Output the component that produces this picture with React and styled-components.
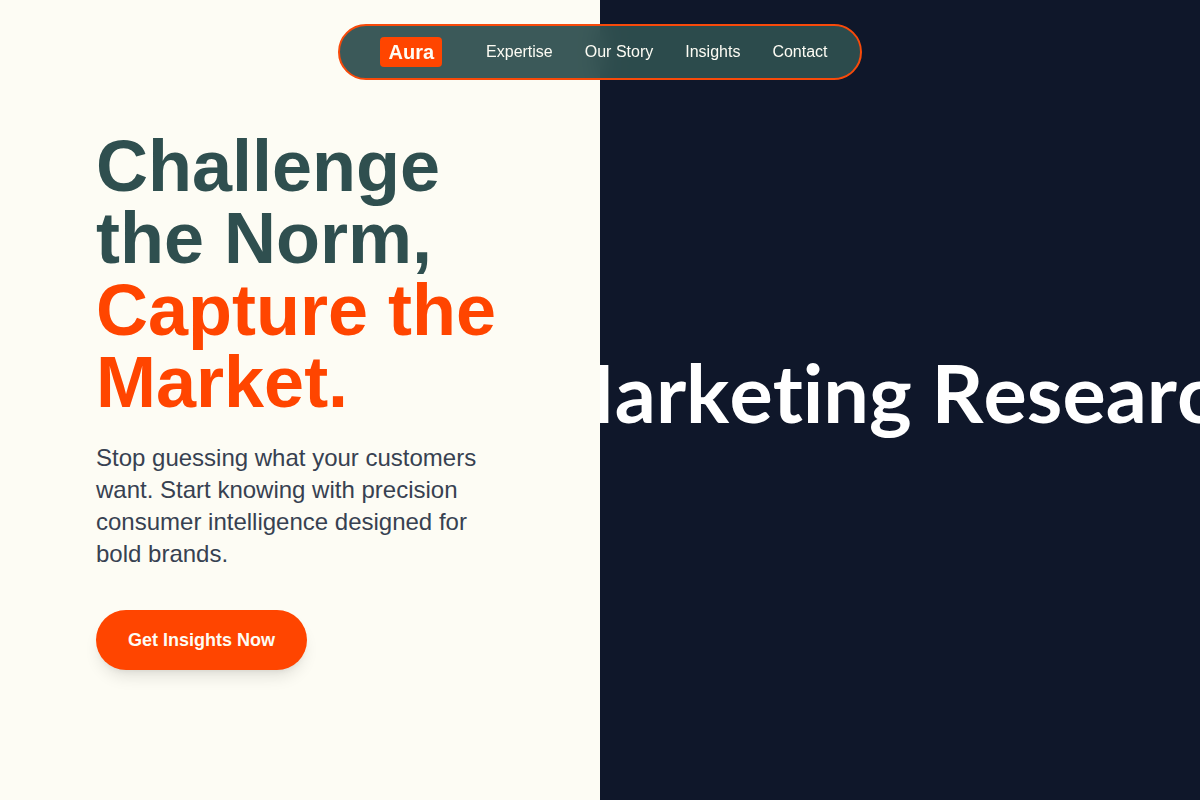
import React from 'react';
import styled, { createGlobalStyle } from 'styled-components';

const GlobalStyle = createGlobalStyle`
  * {
    box-sizing: border-box;
  }

  body {
    margin: 0;
    background-color: #fdfcf4;
    font-family: "Liberation Sans", Arial, sans-serif;
  }
`;

const Header = styled.header`
  position: fixed;
  top: 24px;
  left: 0;
  right: 0;
  z-index: 10;
  display: flex;
  justify-content: center;
`;

const Nav = styled.nav`
  display: flex;
  align-items: center;
  gap: 32px;
  padding: 11px 32px;
  border: 2px solid #f84a0a;
  border-radius: 9999px;
  background-color: rgba(47, 79, 79, 0.94);
  backdrop-filter: blur(12px);
`;

const Logo = styled.a`
  margin: 0 12px 0 8px;
  padding: 4px 8px;
  border-radius: 4px;
  background-color: #ff4500;
  color: #fdfcf4;
  font-size: 20px;
  font-weight: 700;
  line-height: 22px;
  text-decoration: none;
`;

const NavLink = styled.a`
  color: #fdfcf4;
  font-size: 16px;
  line-height: 24px;
  text-decoration: none;
`;

const Hero = styled.main`
  display: grid;
  grid-template-columns: 1fr 1fr;
  min-height: 100vh;
`;

const Intro = styled.section`
  display: flex;
  flex-direction: column;
  align-items: flex-start;
  justify-content: center;
  padding: 96px;
`;

const Title = styled.h1`
  margin: 0 0 24px;
  color: #2f4f4f;
  font-size: 72px;
  font-weight: 700;
  line-height: 72px;
`;

const Accent = styled.span`
  display: block;
  color: #ff4500;
`;

const Lead = styled.p`
  margin: 0 0 40px;
  color: #374151;
  font-size: 24px;
  line-height: 32px;
`;

const Button = styled.button`
  padding: 16px 32px;
  border: none;
  border-radius: 9999px;
  background-color: #ff4500;
  box-shadow: 0 10px 15px -3px rgba(0, 0, 0, 0.1), 0 4px 6px -4px rgba(0, 0, 0, 0.1);
  color: #fdfcf4;
  font-family: inherit;
  font-size: 18px;
  font-weight: 700;
  line-height: 28px;
  cursor: pointer;
`;

const Banner = styled.section`
  display: flex;
  align-items: center;
  justify-content: center;
  min-width: 0;
  padding-bottom: 16px;
  overflow: hidden;
  background-color: #0f172a;
`;

// wider than its column on most screens, both ends run off the edge
const BannerText = styled.span`
  flex-shrink: 0;
  color: #fff;
  font-family: Lato, sans-serif;
  font-size: 81px;
  font-weight: 700;
  font-kerning: none;
  font-variant-ligatures: none;
  line-height: 96px;
  white-space: nowrap;
`;

const links = [
  { label: 'Expertise', href: '#expertise' },
  { label: 'Our Story', href: '#story' },
  { label: 'Insights', href: '#insights' },
  { label: 'Contact', href: '#contact' },
];

const App = () => {
  return (
    <>
      <GlobalStyle />
      <Header>
        <Nav>
          <Logo href="#home">Aura</Logo>
          {links.map((link) => (
            <NavLink key={link.href} href={link.href}>{link.label}</NavLink>
          ))}
        </Nav>
      </Header>
      <Hero>
        <Intro>
          <Title>
            Challenge the Norm,
            <Accent>Capture the Market.</Accent>
          </Title>
          <Lead>
            Stop guessing what your customers want. Start knowing with precision consumer intelligence designed for bold brands.
          </Lead>
          <Button type="button">Get Insights Now</Button>
        </Intro>
        <Banner>
          <BannerText>Marketing Research</BannerText>
        </Banner>
      </Hero>
    </>
  );
};

export default App;
